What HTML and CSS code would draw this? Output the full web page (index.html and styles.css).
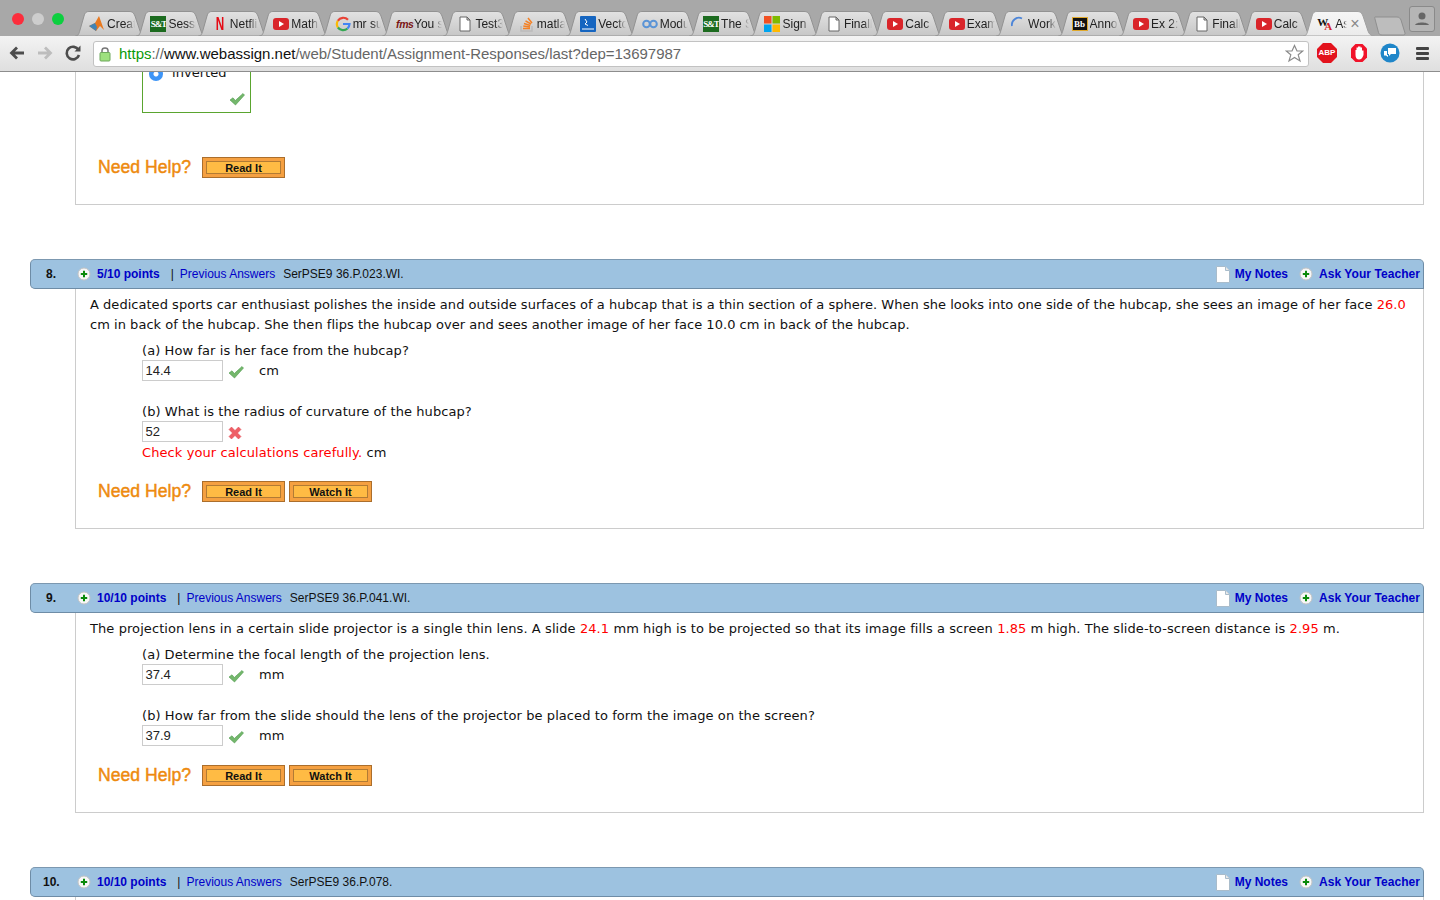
FILE: index.html
```html
<!DOCTYPE html>
<html lang="en">
<head>
<meta charset="utf-8">
<title>WebAssign</title>
<link rel="stylesheet" href="styles.css">
</head>
<body>
<svg class="defs" width="0" height="0" aria-hidden="true">
  <defs>
    <linearGradient id="tabfill" x1="0" y1="0" x2="0" y2="1"><stop offset="0" stop-color="#e2e2e2"/><stop offset="1" stop-color="#c6c6c6"/></linearGradient>
    <linearGradient id="tabactive" x1="0" y1="0" x2="0" y2="1"><stop offset="0" stop-color="#f6f6f6"/><stop offset="1" stop-color="#ebebeb"/></linearGradient>
    <symbol id="tabshape" viewBox="0 0 72 25"><path d="M0.5 25C3 25 4 23 5 19L9 5C10 1.500 11.500 0.500 14 0.500L54 0.500C57 0.500 58.500 1.500 60 5L65 20C66 23 68 25 71.500 25Z" fill="url(#tabfill)" stroke="#929292"/></symbol>
    <symbol id="tabshapeactive" viewBox="0 0 72 25"><path d="M0.500 25C3 25 4 23 5 19L9 5C10 1.500 11.500 0.500 14 0.500L54 0.500C57 0.500 58.500 1.500 60 5L65 20C66 23 68 25 71.500 25Z" fill="url(#tabactive)" stroke="#a0a0a0"/></symbol>
    <symbol id="yt" viewBox="0 0 16 16"><rect x="0" y="2" width="16" height="12" rx="3" fill="#d9252a"/><path d="M6 5L11 8L6 11Z" fill="#fff"/></symbol>
    <symbol id="doc" viewBox="0 0 16 16"><path d="M3 1H10L13 4V15H3ZM10 1V4H13" fill="#fff" stroke="#666"/></symbol>
    <symbol id="plus" viewBox="0 0 14 14"><circle cx="7" cy="7" r="6" fill="#f7f7f7" stroke="#c4c4c4"/><path d="M7 3.800V10.200M3.800 7H10.200" stroke="#0a8a0a" stroke-width="2"/></symbol>
    <symbol id="check" viewBox="0 0 16 14"><path d="M1 8L4 5.800L6.300 8.500L14 1.500L15.500 3L6.500 13Z" fill="#74b76c" stroke="#4e9a4c" stroke-width="0.600"/></symbol>
    <symbol id="cross" viewBox="0 0 14 14"><path d="M1 3.500L3.500 1L7 4.500L10.500 1L13 3.500L9.500 7L13 10.500L10.500 13L7 9.500L3.500 13L1 10.500L4.500 7Z" fill="#ee5f66" stroke="#e0434c" stroke-width="0.500"/></symbol>
    <symbol id="note" viewBox="0 0 14 17"><path d="M0.500 0.500H9.500L13.500 4.500V16.500H0.500Z" fill="#fff" stroke="#a9bccb"/><path d="M9.500 0.500V4.500H13.500" fill="#e8e8e8" stroke="#a9bccb"/></symbol>
  </defs>
</svg>
<div class="browser">
  <div class="tabstrip">
    <div class="traffic">
      <span class="light red"></span><span class="light grey"></span><span class="light green"></span>
    </div>
    <div class="tabs">
      <div class="tab"><svg class="tabbg"><use href="#tabshape"/></svg><svg class="fav" viewBox="0 0 16 16"><path d="M0 10L6 7L10 0L15 14L11 10L7 15Z" fill="#e8781e"/><path d="M0 10L6 7L8 11L7 15Z" fill="#3f83b5"/></svg><span class="tabtext">Creat</span></div>
      <div class="tab"><svg class="tabbg"><use href="#tabshape"/></svg><span class="fav sq">S&amp;T</span><span class="tabtext">Sessi</span></div>
      <div class="tab"><svg class="tabbg"><use href="#tabshape"/></svg><span class="fav netflix">N</span><span class="tabtext">Netflix</span></div>
      <div class="tab"><svg class="tabbg"><use href="#tabshape"/></svg><svg class="fav"><use href="#yt"/></svg><span class="tabtext">Math</span></div>
      <div class="tab"><svg class="tabbg"><use href="#tabshape"/></svg><svg class="fav" viewBox="0 0 16 16"><path d="M13 3.800A6.500 6.500 0 0 0 2.800 4.800" fill="none" stroke="#e94235" stroke-width="2.200"/><path d="M2.800 4.800A6.500 6.500 0 0 0 2.900 11.500" fill="none" stroke="#fabb05" stroke-width="2.200"/><path d="M2.900 11.500A6.500 6.500 0 0 0 12.500 12.500" fill="none" stroke="#34a853" stroke-width="2.200"/><path d="M12.500 12.500A6.500 6.500 0 0 0 14.500 8H8" fill="none" stroke="#4285f4" stroke-width="2.200"/></svg><span class="tabtext">mr su</span></div>
      <div class="tab"><svg class="tabbg"><use href="#tabshape"/></svg><span class="fav fms">fms</span><span class="tabtext">You s</span></div>
      <div class="tab"><svg class="tabbg"><use href="#tabshape"/></svg><svg class="fav"><use href="#doc"/></svg><span class="tabtext">Test3</span></div>
      <div class="tab"><svg class="tabbg"><use href="#tabshape"/></svg><svg class="fav" viewBox="0 0 16 16"><path d="M2 10V15H13V10" fill="none" stroke="#bcbbbb" stroke-width="1.500"/><path d="M4 12.500H11M4.300 10L11 11M5 7.500L11.300 9.500M6.500 4.800L12 8M9 2L13 7" fill="none" stroke="#f48024" stroke-width="1.500"/></svg><span class="tabtext">matla</span></div>
      <div class="tab"><svg class="tabbg"><use href="#tabshape"/></svg><svg class="fav" viewBox="0 0 16 16"><rect width="16" height="16" rx="1" fill="#1565c0"/><path d="M5 3L7 6L5 8L8 9.500M2 13H14" fill="none" stroke="#fff"/></svg><span class="tabtext">Vecto</span></div>
      <div class="tab"><svg class="tabbg"><use href="#tabshape"/></svg><svg class="fav" viewBox="0 0 16 16"><circle cx="4.500" cy="8" r="3.300" fill="none" stroke="#5b94d6" stroke-width="2"/><circle cx="11.500" cy="8" r="3.300" fill="none" stroke="#5b94d6" stroke-width="2"/></svg><span class="tabtext">Modu</span></div>
      <div class="tab"><svg class="tabbg"><use href="#tabshape"/></svg><span class="fav sq">S&amp;T</span><span class="tabtext">The S</span></div>
      <div class="tab"><svg class="tabbg"><use href="#tabshape"/></svg><svg class="fav" viewBox="0 0 16 16"><rect width="7.500" height="7.500" fill="#f25022"/><rect x="8.500" width="7.500" height="7.500" fill="#7fba00"/><rect y="8.500" width="7.500" height="7.500" fill="#00a4ef"/><rect x="8.500" y="8.500" width="7.500" height="7.500" fill="#ffb900"/></svg><span class="tabtext">Sign i</span></div>
      <div class="tab"><svg class="tabbg"><use href="#tabshape"/></svg><svg class="fav"><use href="#doc"/></svg><span class="tabtext">Finall</span></div>
      <div class="tab"><svg class="tabbg"><use href="#tabshape"/></svg><svg class="fav"><use href="#yt"/></svg><span class="tabtext">Calc</span></div>
      <div class="tab"><svg class="tabbg"><use href="#tabshape"/></svg><svg class="fav"><use href="#yt"/></svg><span class="tabtext">Exam</span></div>
      <div class="tab"><svg class="tabbg"><use href="#tabshape"/></svg><svg class="fav" viewBox="0 0 16 16"><path d="M2 10A7 7 0 0 1 12 2.500" fill="none" stroke="#4c85d8" stroke-width="1.800"/></svg><span class="tabtext">Work</span></div>
      <div class="tab"><svg class="tabbg"><use href="#tabshape"/></svg><span class="fav bb">Bb</span><span class="tabtext">Anno</span></div>
      <div class="tab"><svg class="tabbg"><use href="#tabshape"/></svg><svg class="fav"><use href="#yt"/></svg><span class="tabtext">Ex 2:</span></div>
      <div class="tab"><svg class="tabbg"><use href="#tabshape"/></svg><svg class="fav"><use href="#doc"/></svg><span class="tabtext">Finall</span></div>
      <div class="tab"><svg class="tabbg"><use href="#tabshape"/></svg><svg class="fav"><use href="#yt"/></svg><span class="tabtext">Calc</span></div>
      <div class="tab active"><svg class="tabbg"><use href="#tabshapeactive"/></svg><span class="fav wa"><span class="wa-w">W</span><span class="wa-a">A</span></span><span class="tabtext short">As</span><span class="tabclose">×</span></div>
      <svg class="newtab" width="32" height="20" viewBox="0 0 32 20"><path d="M1 1H23C25 1 26 2 27 4L31 17C31.500 18.500 30 19 29 19H8C6 19 5 18 4.500 16.500L1 3C0.700 2 0.500 1 1 1Z" fill="#bdbdbd" stroke="#8f8f8f"/></svg>
    </div>
    <div class="profile"><svg width="16" height="16" viewBox="0 0 16 16"><circle cx="8" cy="5" r="3.500" fill="#666"/><path d="M1 14C2 10.500 14 10.500 15 14Z" fill="#666"/></svg></div>
  </div>
  <div class="toolbar">
    <svg class="navicon" width="18" height="16" viewBox="0 0 18 16"><path d="M16 8H4M9 2.500L3.500 8L9 13.500" fill="none" stroke="#4d4d4d" stroke-width="2.800"/></svg>
    <svg class="navicon" width="18" height="16" viewBox="0 0 18 16"><path d="M2 8H14M9 2.500L14.500 8L9 13.500" fill="none" stroke="#bdbdbd" stroke-width="2.800"/></svg>
    <svg class="navicon" width="18" height="18" viewBox="0 0 18 18"><path d="M14.500 6A6.300 6.300 0 1 0 15 11" fill="none" stroke="#4d4d4d" stroke-width="2.600"/><path d="M10.500 7.500H16.500V1.500Z" fill="#4d4d4d"/></svg>
    <div class="omnibox">
      <svg class="lock" width="12" height="16" viewBox="0 0 12 16"><path d="M3 7V4.500C3 1 9 1 9 4.500V7" fill="none" stroke="#777" stroke-width="1.500"/><rect x="1" y="6.500" width="10" height="8.500" rx="1" fill="#9ee07f" stroke="#6ea85c"/></svg>
      <span class="url"><span class="scheme">https</span><span class="urlgrey">://</span><span class="host">www.webassign.net</span><span class="urlgrey">/web/Student/Assignment-Responses/last?dep=13697987</span></span>
      <svg class="star" width="19" height="19" viewBox="0 0 19 19"><path d="M9.500 1.500L12 7H17.800L13.200 10.800L15 17L9.500 13.500L4 17L5.800 10.800L1.200 7H7Z" fill="#fff" stroke="#8a8a8a" stroke-width="1.200"/></svg>
    </div>
    <div class="exts">
      <span class="abp">ABP</span>
      <svg width="20" height="20" viewBox="0 0 20 20"><path d="M6.500 1H13.500L18 5.500V14.500L13.500 19H6.500L2 14.500V5.500Z" fill="#f1132a"/><path d="M6.500 7V12C6.500 15 8 16.500 10 16.500C12 16.500 13.500 15 14.500 12V7.500H13V4.500H11.500V3.500H9V4.500H7.500V7Z" fill="#fff"/></svg>
      <svg width="20" height="20" viewBox="0 0 20 20"><circle cx="10" cy="10" r="9.500" fill="#1f86c9"/><path d="M8 5H16V11H11L9 13V11H8ZM4 8H7V12H8V14L6 12.500H4Z" fill="#fff"/></svg>
      <span class="menu"><span></span><span></span><span></span></span>
    </div>
  </div>
</div>
<main class="page">
  <section class="card">
    <div class="indent answerbox">
      <div class="choice"><span class="radio"></span><span>inverted</span></div>
      <svg class="boxcheck" width="16" height="14"><use href="#check"/></svg>
    </div>
    <div class="help help-first">
      <span class="needhelp">Need Help?</span>
      <span class="btn"><span>Read It</span></span>
    </div>
  </section>

  <section class="question">
    <header class="qbar">
      <span class="qnum">8.</span>
      <svg class="plusicon" width="14" height="14"><use href="#plus"/></svg>
      <span class="points">5/10 points</span>
      <span class="sep">|</span>
      <span class="prev">Previous Answers</span>
      <span class="ref">SerPSE9 36.P.023.WI.</span>
      <span class="spacer"></span>
      <svg class="noteicon" width="14" height="17"><use href="#note"/></svg>
      <span class="points">My Notes</span>
      <svg class="plusicon ask" width="14" height="14"><use href="#plus"/></svg>
      <span class="points teacher">Ask Your Teacher</span>
    </header>
    <div class="card">
      <p class="text">A dedicated sports car enthusiast polishes the inside and outside surfaces of a hubcap that is a thin section of a sphere. When she looks into one side of the hubcap, she sees an image of her face <span class="val">26.0</span> cm in back of the hubcap. She then flips the hubcap over and sees another image of her face 10.0 cm in back of the hubcap.</p>
      <div class="indent">
        <p class="part first">(a) How far is her face from the hubcap?</p>
        <div class="answer"><span class="field">14.4</span><svg class="mark" width="16" height="14"><use href="#check"/></svg><span class="unit">cm</span></div>
        <p class="part">(b) What is the radius of curvature of the hubcap?</p>
        <div class="answer"><span class="field">52</span><svg class="mark cross" width="14" height="14"><use href="#cross"/></svg></div>
        <p class="hint"><span class="val">Check your calculations carefully.</span> cm</p>
      </div>
      <div class="help">
        <span class="needhelp">Need Help?</span>
        <span class="btn"><span>Read It</span></span>
        <span class="btn"><span>Watch It</span></span>
      </div>
    </div>
  </section>

  <section class="question">
    <header class="qbar">
      <span class="qnum">9.</span>
      <svg class="plusicon" width="14" height="14"><use href="#plus"/></svg>
      <span class="points">10/10 points</span>
      <span class="sep">|</span>
      <span class="prev">Previous Answers</span>
      <span class="ref">SerPSE9 36.P.041.WI.</span>
      <span class="spacer"></span>
      <svg class="noteicon" width="14" height="17"><use href="#note"/></svg>
      <span class="points">My Notes</span>
      <svg class="plusicon ask" width="14" height="14"><use href="#plus"/></svg>
      <span class="points teacher">Ask Your Teacher</span>
    </header>
    <div class="card">
      <p class="text loose">The projection lens in a certain slide projector is a single thin lens. A slide <span class="val">24.1</span> mm high is to be projected so that its image fills a screen <span class="val">1.85</span> m high. The slide-to-screen distance is <span class="val">2.95</span> m.</p>
      <div class="indent">
        <p class="part first">(a) Determine the focal length of the projection lens.</p>
        <div class="answer"><span class="field">37.4</span><svg class="mark" width="16" height="14"><use href="#check"/></svg><span class="unit">mm</span></div>
        <p class="part">(b) How far from the slide should the lens of the projector be placed to form the image on the screen?</p>
        <div class="answer"><span class="field">37.9</span><svg class="mark" width="16" height="14"><use href="#check"/></svg><span class="unit">mm</span></div>
      </div>
      <div class="help">
        <span class="needhelp">Need Help?</span>
        <span class="btn"><span>Read It</span></span>
        <span class="btn"><span>Watch It</span></span>
      </div>
    </div>
  </section>

  <section class="question">
    <header class="qbar">
      <span class="qnum wide">10.</span>
      <svg class="plusicon" width="14" height="14"><use href="#plus"/></svg>
      <span class="points">10/10 points</span>
      <span class="sep">|</span>
      <span class="prev">Previous Answers</span>
      <span class="ref">SerPSE9 36.P.078.</span>
      <span class="spacer"></span>
      <svg class="noteicon" width="14" height="17"><use href="#note"/></svg>
      <span class="points">My Notes</span>
      <svg class="plusicon ask" width="14" height="14"><use href="#plus"/></svg>
      <span class="points teacher">Ask Your Teacher</span>
    </header>
    <div class="card stub"></div>
  </section>
</main>
</body>
</html>
```
FILE: styles.css
```css
* { box-sizing: border-box; }
html, body { margin: 0; height: 900px; overflow: hidden; background: #fff; }
body { font-family: "DejaVu Sans", sans-serif; font-size: 13px; letter-spacing: 0.03px; color: #111; }
p { margin: 0; }
.defs { position: absolute; }

/* Browser chrome */
.browser { height: 72px; letter-spacing: 0; }
.tabstrip { height: 36px; background: #a8a8a8; display: flex; }
.traffic { width: 75px; padding: 13px 0 0 12px; display: flex; gap: 8px; align-items: flex-start; flex: none; }
.light { width: 12px; height: 12px; border-radius: 50%; }
.red { background: #fc2d3c; }
.grey { background: #cdcdcd; }
.green { background: #0ccf3f; }
.tabs { display: flex; padding-top: 11px; flex: none; width: 1332px; }
.tab { position: relative; width: 61.41px; height: 25px; flex: none; display: flex; align-items: center; padding-left: 14px; font-family: "Liberation Sans", sans-serif; font-size: 12px; color: #222; }
.tabbg { position: absolute; left: 0; top: 0; width: 72px; height: 25px; }
.fav { position: relative; width: 16px; height: 16px; flex: none; }
.tabtext { position: relative; margin-left: 2px; width: 28px; overflow: hidden; white-space: nowrap; -webkit-mask-image: linear-gradient(90deg, #000 70%, transparent); mask-image: linear-gradient(90deg, #000 70%, transparent); }
.sq { background: #1c6b1f; color: #fff; font: bold 9px/17px "Liberation Serif", serif; letter-spacing: -1px; text-align: center; overflow: hidden; }
.netflix { color: #e50914; font: bold 18px/16px "Liberation Sans", sans-serif; text-align: center; transform: scaleX(0.65); }
.fms { color: #7a1616; font: italic bold 10.5px/16px "Liberation Sans", sans-serif; letter-spacing: -0.4px; white-space: nowrap; }
.bb { background: #111; color: #fff; border: 1px solid #e0a92c; font: bold 9px/12px "Liberation Serif", serif; text-align: center; height: 14px; }
.wa { font: bold 11px/14px "Liberation Serif", serif; }
.wa-w { position: absolute; left: 0; top: -1px; color: #111; }
.wa-a { position: absolute; left: 7px; top: 3px; color: #d2232a; }
.active { width: 70px; z-index: 2; }
.tabtext.short { width: 12px; }
.tabclose { position: relative; margin-left: 3px; font-size: 16px; line-height: 16px; color: #888; }
.newtab { flex: none; margin: 5px 0 0 1px; }
.profile { position: absolute; left: 1409px; top: 6px; width: 26px; height: 26px; border: 1px solid #8a8a8a; border-radius: 3px; background: #b5b5b5; display: flex; align-items: center; justify-content: center; }
.toolbar { position: relative; height: 36px; background: linear-gradient(#f3f3f3, #dfdfdf); border-bottom: 1px solid #8d8d8d; display: flex; align-items: center; padding: 0 0 1px 8px; gap: 10px; }
.navicon { flex: none; }
.omnibox { width: 1216px; height: 26px; margin: 1px 0 0 1px; background: #fff; border: 1px solid #c2c2c2; border-radius: 3px; display: flex; align-items: center; padding: 0 4px 0 5px; flex: none; }
.lock { flex: none; }
.url { margin-left: 8px; font-family: "Liberation Sans", sans-serif; font-size: 15px; letter-spacing: -0.015px; white-space: nowrap; flex: 1; }
.scheme { color: #0a9a0a; }
.urlgrey { color: #666; }
.host { color: #111; }
.star { flex: none; }
.exts { display: flex; align-items: center; gap: 11.5px; flex: none; margin-left: -2px; }
.abp { width: 20px; height: 20px; background: #e3131d; color: #fff; font: bold 8px/20px "Liberation Sans", sans-serif; text-align: center; clip-path: polygon(30% 0, 70% 0, 100% 30%, 100% 70%, 70% 100%, 30% 100%, 0 70%, 0 30%); }
.menu { width: 13px; display: flex; flex-direction: column; gap: 2px; margin-left: 4.5px; }
.menu span { height: 3px; background: #444; border-radius: 1px; }

/* Page */
.page { height: 828px; overflow: hidden; padding-right: 16px; }
.card { margin-left: 75px; border: 1px solid #ccc; border-top: 0; padding: 5px 14px 26px; }
.page > .card { padding-top: 0; }
.question { margin-top: 54px; }
.indent { margin-left: 52px; }
.answerbox { position: relative; width: 109px; height: 41px; border: 1px solid #5aa52f; border-top: 0; overflow: hidden; }
.choice { margin-top: -9px; display: flex; align-items: center; padding-left: 6px; gap: 9px; line-height: 20px; }
.radio { width: 14px; height: 14px; border-radius: 50%; background: radial-gradient(circle, #fff 0 2px, #3d94f6 3px); margin-top: 2px; }
.boxcheck { position: absolute; right: 5px; top: 20px; }
.help { margin: 19px 0 0 8px; display: flex; align-items: center; height: 21px; gap: 4px; }
.help-first { margin-top: 44px; }
.needhelp { font: 17.6px/21px "Liberation Sans", sans-serif; color: #ee8a0e; -webkit-text-stroke: 0.45px #ee8a0e; width: 100px; flex: none; letter-spacing: 0.02px; }
.btn { width: 83px; height: 21px; padding: 3px 3px; background: #f5a041; border: 1px solid #ab6e2c; flex: none; letter-spacing: 0; }
.btn span { display: block; height: 13px; border: 1px solid #b27b34; background: #ffbb44; font: bold 11px/12px "Liberation Sans", sans-serif; color: #111; text-align: center; }

.qbar { height: 30px; margin-left: 30px; background: #9dc2e0; border: 1px solid #6e8ca6; border-top-color: #7c98b0; border-radius: 5px 5px 0 5px; display: flex; align-items: center; font-family: "Liberation Sans", sans-serif; font-size: 12px; letter-spacing: 0; padding-right: 3px; color: #111; }
.qnum { width: 46px; padding-left: 15px; font-weight: bold; flex: none; }
.qnum.wide { padding-left: 12px; }
.plusicon { flex: none; margin-right: 6px; }
.plusicon.ask { margin: 0 6px 0 11px; }
.noteicon { flex: none; margin-right: 5px; }
.points { font-weight: bold; color: #0000c8; }
.teacher { letter-spacing: 0.06px; }
.sep { margin: 0 6px 0 11px; }
.prev { color: #0000c8; }
.ref { margin-left: 8px; }
.spacer { flex: 1; }

.text { line-height: 20px; padding-top: 1px; margin-bottom: -1px; }
.text.loose { letter-spacing: 0.08px; }
.val { color: #f00; }
.part { line-height: 22px; height: 20px; margin-top: 20px; letter-spacing: 0.08px; }
.part.first { margin-top: 6px; }
.answer { display: flex; align-items: center; height: 21px; }
.field { width: 81px; height: 21px; border: 1px solid #ccc; padding-left: 2.5px; font: 13px/19px "Liberation Sans", sans-serif; letter-spacing: 0; flex: none; color: #222; }
.mark { margin: 2px 0 0 5px; flex: none; }
.unit { margin-left: 15px; }
.hint { line-height: 22px; height: 20px; letter-spacing: 0.09px; }
.stub { height: 4px; padding: 0; border-bottom: 0; }
```
